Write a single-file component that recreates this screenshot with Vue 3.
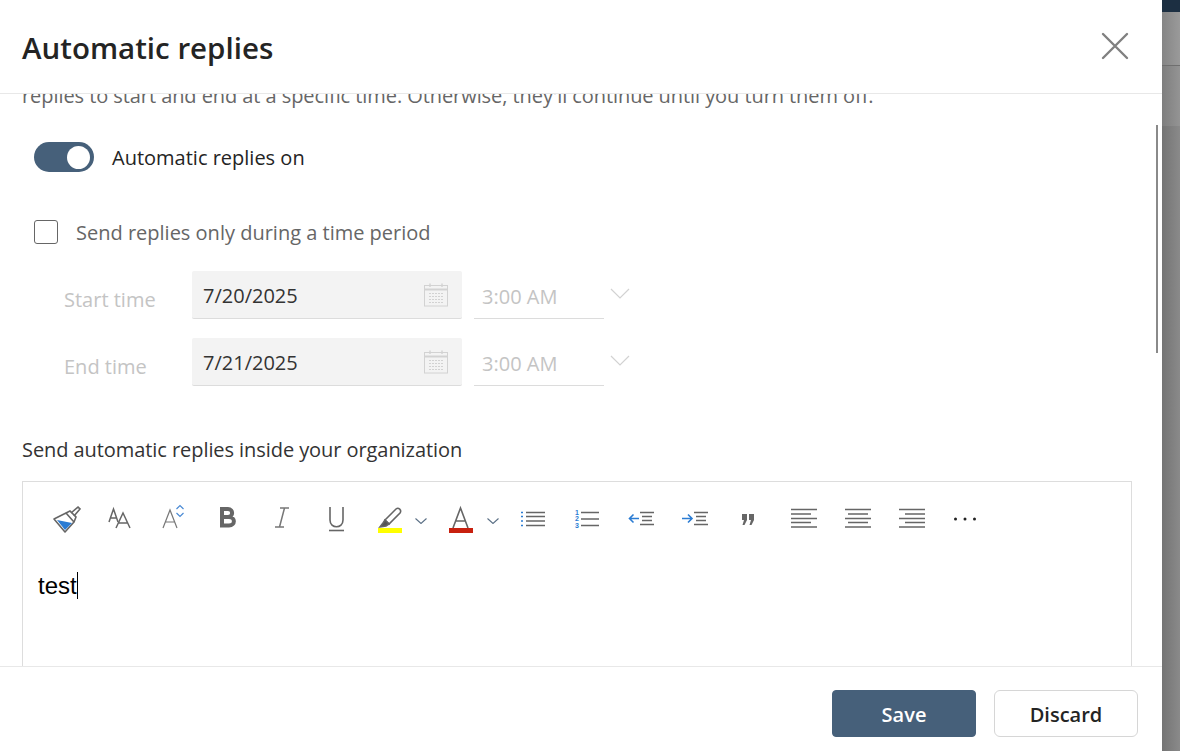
<script setup>
import { ref } from 'vue'

const repliesOn = ref(true)
const timeRows = [
  { label: 'Start time', date: '7/20/2025', time: '3:00 AM' },
  { label: 'End time', date: '7/21/2025', time: '3:00 AM' }
]
</script>

<template>
  <div class="page">
    <div class="modal">
      <header class="modal-head">
        <h1>Automatic replies</h1>
        <button class="close-btn" aria-label="Close">
          <svg width="28" height="28" viewBox="0 0 28 28"><path d="M2 2 L26 26 M26 2 L2 26" stroke="#808080" stroke-width="2.4" stroke-linecap="round" fill="none"/></svg>
        </button>
      </header>

      <div class="modal-body">
        <p class="intro">replies to start and end at a specific time. Otherwise, they'll continue until you turn them off.</p>

        <div class="toggle-row">
          <button class="toggle" :class="{ on: repliesOn }" @click="repliesOn = !repliesOn"><span class="knob"></span></button>
          <span class="row-text">Automatic replies on</span>
        </div>

        <div class="check-row">
          <span class="checkbox"></span>
          <span class="row-text">Send replies only during a time period</span>
        </div>

        <div v-for="row in timeRows" :key="row.label" class="time-row">
          <span class="time-label">{{ row.label }}</span>
          <div class="date-field">
            <span class="date-value">{{ row.date }}</span>
            <svg width="24" height="24" viewBox="0 0 24 24" fill="none" stroke="#d2d2d2">
              <rect x="0.5" y="2.5" width="23" height="20.5"/>
              <path d="M0.5 6.5H23.5" stroke-width="2"/>
              <path d="M6 0.5V4M18 0.5V4" stroke-width="1.4"/>
              <path d="M5 10.5H19M5 13.5H19M5 16.5H19M5 19.5H19" stroke-dasharray="2 1"/>
            </svg>
          </div>
          <div class="time-field">{{ row.time }}</div>
          <svg class="time-caret" width="20" height="11" viewBox="0 0 20 11"><path d="M1 1 L10 10 L19 1" fill="none" stroke="#d2d2d2" stroke-width="1.2"/></svg>
        </div>

        <div class="section-label">Send automatic replies inside your organization</div>

        <div class="editor">
          <div class="toolbar">
            <!-- format painter -->
            <svg class="tool" viewBox="0 0 30 30" fill="none" stroke="#666">
              <path d="M3 16 L15 10 L23 19 L14 29 Z" stroke-width="1.6" stroke-linejoin="round"/>
              <path d="M6 17 L21 20 L14 27 Z" fill="#2b7cd3" stroke="none"/>
              <path d="M15 10 L19 8 L25 14 L23 19" stroke-width="1.6"/>
              <path d="M20 10 L27 4 L29 6 L23 13" stroke-width="1.6"/>
            </svg>
            <!-- font size -->
            <svg class="tool" viewBox="0 0 30 30" fill="none" stroke="#666" stroke-width="1.5">
              <path d="M4 19 L8.5 6 L13 19 M5.5 15 H11.5"/>
              <path d="M11 25 L18 10 L25 25 M13.5 20 H22.5"/>
            </svg>
            <!-- grow font -->
            <svg class="tool" viewBox="0 0 30 30" fill="none" stroke="#777" stroke-width="1.2">
              <path d="M4 25 L11 7 L18 25 M6.5 19 H15.5"/>
              <path d="M17.5 6 L21 2.5 L24.5 6 M17.5 10 L21 13.5 L24.5 10" stroke="#4a8ad4"/>
            </svg>
            <!-- bold -->
            <svg class="tool" viewBox="0 0 30 30" fill="none" stroke="#666" stroke-width="4">
              <path d="M9 6 H15 C20.5 6 20.5 14 15 14 H9 M9 14 H16 C22.5 14 22.5 22.5 16 22.5 H9 M9 4 V24.5"/>
            </svg>
            <!-- italic -->
            <svg class="tool" viewBox="0 0 30 30" fill="none" stroke="#777" stroke-width="1.5">
              <path d="M13 5 H22 M8 24 H17 M17.5 5 L12.5 24"/>
            </svg>
            <!-- underline -->
            <svg class="tool" viewBox="0 0 30 30" fill="none" stroke="#666" stroke-width="1.6">
              <path d="M9 4 V17 C9 26 22 26 22 17 V4"/>
              <path d="M8 27.5 H23"/>
            </svg>
            <!-- highlight -->
            <svg class="tool" viewBox="0 0 30 30" fill="none" stroke="#666" stroke-width="1.6">
              <path d="M10 17 L21 6 C23.5 4 27 7 25 10 L14 21 Z"/>
              <path d="M10 17 L14 21 L11 23 L5 24 L8 20 Z" fill="#555"/>
              <rect x="3" y="25" width="24" height="5" fill="#ffff00" stroke="none"/>
            </svg>
            <svg class="tool-caret" viewBox="0 0 12 6"><path d="M0.5 0.5 L6 5.5 L11.5 0.5" fill="none" stroke="#5a6f85" stroke-width="1.1"/></svg>
            <!-- font color -->
            <svg class="tool" viewBox="0 0 30 30" fill="none" stroke="#666" stroke-width="1.6">
              <path d="M7 25 L14.5 5 L22 25 M10 18 H19"/>
              <rect x="3" y="25" width="24" height="5" fill="#c8200f" stroke="none"/>
            </svg>
            <svg class="tool-caret wide" viewBox="0 0 12 6"><path d="M0.5 0.5 L6 5.5 L11.5 0.5" fill="none" stroke="#5a6f85" stroke-width="1.1"/></svg>
            <!-- bullets -->
            <svg class="tool" viewBox="0 0 30 30" fill="none" stroke="#666" stroke-width="1.3">
              <path d="M8 9.5H27M8 13.5H27M8 18H27M8 22.5H27"/>
              <path d="M3 9.5H5M3 13.5H5M3 18H5M3 22.5H5" stroke="#2b7cd3"/>
            </svg>
            <!-- numbering -->
            <svg class="tool" viewBox="0 0 30 30" fill="none" stroke="#666" stroke-width="1.3">
              <path d="M9 9.5H27M9 16H27M9 22.5H27"/>
              <text x="3" y="12" class="num">1</text>
              <text x="3" y="18" class="num">2</text>
              <text x="3" y="25" class="num">3</text>
            </svg>
            <!-- outdent -->
            <svg class="tool" viewBox="0 0 30 30" fill="none" stroke="#666" stroke-width="1.3">
              <path d="M14 9.5H28M16 13.5H26M16 17.5H26M14 21.5H28"/>
              <path d="M13 15.5H3.5 M7.5 11.5 L3.5 15.5 L7.5 19.5" stroke="#2b7cd3" stroke-width="1.6"/>
            </svg>
            <!-- indent -->
            <svg class="tool" viewBox="0 0 30 30" fill="none" stroke="#666" stroke-width="1.3">
              <path d="M14 9.5H28M16 13.5H26M16 17.5H26M14 21.5H28"/>
              <path d="M2 15.5H12 M8 11.5 L12 15.5 L8 19.5" stroke="#2b7cd3" stroke-width="1.6"/>
            </svg>
            <!-- quote -->
            <svg class="tool" viewBox="0 0 30 30" fill="#666">
              <path d="M8 11 H13 V17 L10.5 22 H8.5 L10 17 H8 Z"/>
              <path d="M15 11 H20 V17 L17.5 22 H15.5 L17 17 H15 Z"/>
            </svg>
            <!-- align left -->
            <svg class="tool" viewBox="0 0 30 30" fill="none" stroke="#666" stroke-width="1.3">
              <path d="M3 6.5H29M3 11H23M3 15.5H29M3 19.5H23M3 24H29"/>
            </svg>
            <!-- align center -->
            <svg class="tool" viewBox="0 0 30 30" fill="none" stroke="#666" stroke-width="1.3">
              <path d="M3 6.5H29M6 11H26M3 15.5H29M6 19.5H26M3 24H29"/>
            </svg>
            <!-- align right -->
            <svg class="tool" viewBox="0 0 30 30" fill="none" stroke="#666" stroke-width="1.3">
              <path d="M3 6.5H29M9 11H29M3 15.5H29M9 19.5H29M3 24H29"/>
            </svg>
            <!-- more -->
            <svg class="tool" viewBox="0 0 30 30" fill="#222">
              <circle cx="5.5" cy="16" r="1.5"/>
              <circle cx="15" cy="16" r="1.5"/>
              <circle cx="24.5" cy="16" r="1.5"/>
            </svg>
          </div>
          <div class="editor-text"><span class="caret">test</span></div>
        </div>

        <div class="scroll-thumb"></div>
      </div>

      <footer class="modal-foot">
        <button class="btn primary">Save</button>
        <button class="btn">Discard</button>
      </footer>
    </div>

    <div class="backdrop">
      <div class="nav-strip"></div>
      <div class="shade one"></div>
      <div class="shade two"></div>
      <div class="shade three"></div>
    </div>
  </div>
</template>

<style>
html, body { margin: 0; background: #fff; }
</style>

<style scoped>
.page {
  display: flex;
  width: 1180px;
  height: 751px;
  overflow: hidden;
  font-family: "Open Sans", "Noto Sans", sans-serif;
  font-size: 20px;
  color: #242424;
}

.modal {
  width: 1162px;
  height: 751px;
  display: flex;
  flex-direction: column;
  background: #fff;
}

.modal-head {
  flex: none;
  display: flex;
  align-items: flex-start;
  justify-content: space-between;
  border-bottom: 1px solid #e8e8e8;
  padding: 28px 33px 0 22px;
  height: 65px;
}
.modal-head h1 {
  margin: 0;
  font-size: 29.5px;
  line-height: 40px;
  font-weight: 600;
  color: #242424;
}
.close-btn {
  border: 0;
  background: none;
  padding: 0;
  margin-top: 4px;
  width: 28px;
  height: 28px;
}

.modal-body {
  position: relative;
  flex: 1;
  overflow: hidden;
  min-height: 0;
}
.intro {
  margin: -12px 0 0 22px;
  line-height: 28px;
  letter-spacing: -0.07px;
  color: #666;
  white-space: nowrap;
}

.toggle-row {
  display: flex;
  align-items: center;
  gap: 18px;
  margin: 32px 0 0 34px;
  height: 30px;
}
.row-text {
  line-height: 28px;
  padding-top: 1px;
}
.toggle {
  width: 60px;
  height: 30px;
  border: 0;
  padding: 0 4px;
  border-radius: 15px;
  background: #46607a;
  display: flex;
  align-items: center;
  justify-content: flex-end;
}
.knob {
  width: 23px;
  height: 23px;
  border-radius: 50%;
  background: #fff;
}

.check-row {
  display: flex;
  align-items: center;
  gap: 18px;
  margin: 48px 0 0 34px;
  height: 24px;
  color: #666;
}
.checkbox {
  width: 22px;
  height: 22px;
  border: 1px solid #666;
  border-radius: 3px;
  background: #fff;
}

.time-row {
  display: flex;
  align-items: center;
  height: 48px;
  margin: 27px 0 0 64px;
}
.time-row + .time-row { margin-top: 19px; }
.time-label {
  width: 128px;
  padding-top: 8px;
  color: #c4c4c4;
}
.date-field {
  width: 270px;
  height: 48px;
  box-sizing: border-box;
  background: #f3f3f3;
  border-bottom: 1px solid #dcdcdc;
  border-radius: 2px;
  display: flex;
  align-items: center;
  justify-content: space-between;
  padding: 0 14px 0 11px;
  color: #333;
}
.date-value {
  padding-top: 2px;
}
.time-field {
  width: 130px;
  height: 48px;
  box-sizing: border-box;
  margin-left: 12px;
  padding-left: 8px;
  border-bottom: 1px solid #dcdcdc;
  line-height: 52px;
  color: #c4c4c4;
}
.time-caret {
  margin: -4px 0 0 6px;
}

.section-label {
  margin: 50px 0 0 22px;
  line-height: 28px;
  letter-spacing: -0.07px;
  color: #333;
}

.editor {
  margin: 17px 0 0 22px;
  width: 1110px;
  height: 300px;
  box-sizing: border-box;
  border: 1px solid #ddd;
  background: #fff;
}
.toolbar {
  display: flex;
  align-items: center;
  height: 30px;
  margin: 21px 0 0 16px;
}
.tool {
  width: 30px;
  height: 30px;
  padding: 0 12px;
  flex: none;
}
.tool-caret {
  width: 12px;
  height: 6px;
  margin: 5px 7px 0 -2px;
  flex: none;
}
.tool-caret.wide {
  margin-left: -1px;
}
.num {
  font-family: "Liberation Sans", sans-serif;
  font-size: 7px;
  font-weight: 700;
  fill: #2b7cd3;
  stroke: none;
}
.editor-text {
  margin: 38px 0 0 15px;
  font-family: "Liberation Sans", Arial, sans-serif;
  font-size: 24px;
  line-height: 30px;
  color: #000;
}
.caret {
  border-right: 1px solid #000;
}

.scroll-thumb {
  position: absolute;
  top: 31px;
  right: 4px;
  width: 2px;
  height: 228px;
  background: #8a8a8a;
}

.modal-foot {
  flex: none;
  height: 85px;
  border-top: 1px solid #e8e8e8;
  display: flex;
  align-items: flex-start;
  justify-content: flex-end;
  gap: 18px;
  padding: 23px 24px 0 0;
  box-sizing: border-box;
}
.btn {
  width: 144px;
  height: 47px;
  border: 1px solid #d6d6d6;
  border-radius: 6px;
  padding-top: 3px;
  background: #fff;
  font: 600 20px "Open Sans", "Noto Sans", sans-serif;
  color: #242424;
}
.btn.primary {
  background: #46607a;
  border-color: #46607a;
  color: #fff;
  border-radius: 4px;
}

.backdrop {
  flex: 1;
  display: flex;
  flex-direction: column;
  background: linear-gradient(90deg, #747474, #8a8a8a);
}
.nav-strip {
  height: 12px;
  background: #1c2f42;
}
.shade.one {
  height: 53px;
  background: linear-gradient(90deg, #858585, #9a9a9a);
}
.shade.two {
  height: 60px;
  background: linear-gradient(90deg, #7e7e7e, #949494);
  border-top: 1px solid #6f6f6f;
}
.shade.three {
  flex: 1;
}
</style>
